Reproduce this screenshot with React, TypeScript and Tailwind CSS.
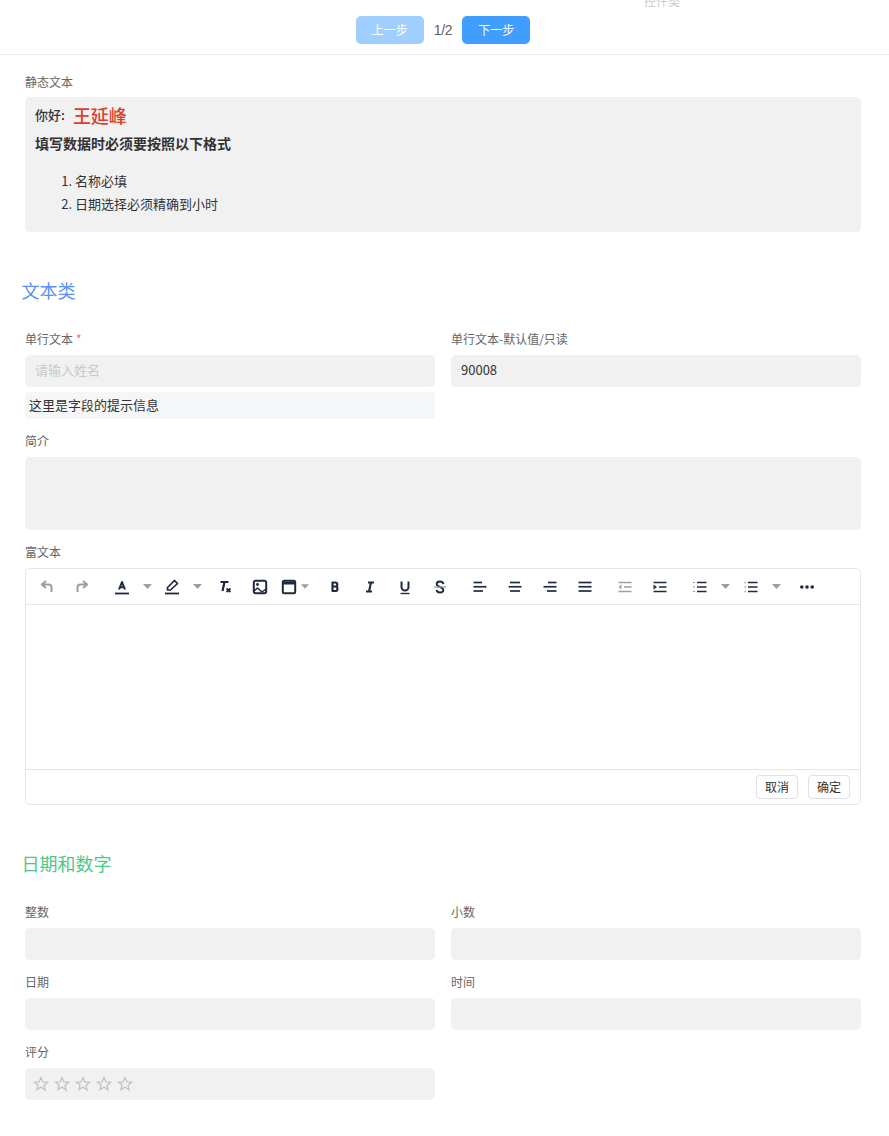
const ink = "#1f2a3f";
const grey = "#9a9ea6";

function Ico({ children, color = ink }: { children: React.ReactNode; color?: string }) {
  return (
    <svg width="16" height="16" viewBox="0 0 16 16" fill="none" stroke={color} strokeWidth="2" strokeLinecap="butt" strokeLinejoin="round">
      {children}
    </svg>
  );
}

function Btn({ className = "w-[35px]", children }: { className?: string; children: React.ReactNode }) {
  return <div className={`flex h-[35px] shrink-0 items-center justify-center ${className}`}>{children}</div>;
}

function Caret({ className = "w-[15px]" }: { className?: string }) {
  return (
    <div className={`flex h-[35px] shrink-0 items-center justify-center ${className}`}>
      <svg width="9" height="5" viewBox="0 0 9 5"><path d="M0 0h9L4.500 5z" fill={grey} /></svg>
    </div>
  );
}

function Lines({ rows }: { rows: [number, number][] }) {
  return (
    <Ico>
      {rows.map(([a, b], i) => (
        <path key={i} d={`M${a} ${3.5 + i * 4.25}H${b}`} strokeWidth="1.700" />
      ))}
    </Ico>
  );
}

function Toolbar() {
  return (
    <div className="flex h-[36px] items-center border-b border-[#e5e5e8] pl-[3.500px]">
      <Btn>
        <Ico color={grey}><path d="M7 2 2.800 5.500 7 9M3 5.500h6.500c2 0 3 1.300 3 3V13" strokeWidth="2" /></Ico>
      </Btn>
      <Btn>
        <Ico color={grey}><path d="m9 2 4.200 3.500L9 9m4-3.500H6.500c-2 0-3 1.300-3 3V13" strokeWidth="2" /></Ico>
      </Btn>
      <Btn className="ml-[5px] w-[35px]">
        <Ico>
          <path d="M5 10.500 8 3l3 7.500M6 8.300h4" strokeWidth="2" />
          <path d="M1 14.500h14" strokeWidth="1.800" />
        </Ico>
      </Btn>
      <Caret />
      <Btn>
        <Ico>
          <path d="M3.500 11V8.500l7-7 3 3-7 6.500z" strokeWidth="1.700" />
          <path d="M1 14.500h14" strokeWidth="1.800" />
        </Ico>
      </Btn>
      <Caret />
      <Btn className="ml-[2.500px] w-[35px]">
        <Ico>
          <path d="M3.500 3h8M7.500 3 5.500 12" strokeWidth="2.200" />
          <path d="m9.500 9.500 4 3.500m0-3.500-4 3.500" strokeWidth="1.800" />
        </Ico>
      </Btn>
      <Btn>
        <Ico>
          <rect x="1.800" y="1.800" width="12.400" height="12.400" rx="2" strokeWidth="2" />
          <circle cx="5.500" cy="5.500" r="1.400" fill={ink} stroke="none" />
          <path d="m2 12 3.500-3 4.500 4 4-3" strokeWidth="1.500" />
        </Ico>
      </Btn>
      <Btn className="w-[24px]">
        <Ico>
          <rect x="1.800" y="1.800" width="12.400" height="12.400" rx="1.500" strokeWidth="2" />
          <path d="M2 4h12" strokeWidth="3" />
        </Ico>
      </Btn>
      <Caret className="w-[8px]" />
      <Btn className="ml-[8.500px] w-[35px]">
        <Ico><path d="M5.500 3.500h2.800a2 2 0 0 1 0 4H5.500zm0 4h3.200a2.300 2.300 0 0 1 0 4.500H5.500z" strokeWidth="2.200" /></Ico>
      </Btn>
      <Btn>
        <Ico><path d="M6 3.500h6M4 12.500h6M9 3.500l-2 9" strokeWidth="2.100" /></Ico>
      </Btn>
      <Btn>
        <Ico>
          <path d="M4.500 2.500V8a3.500 3.500 0 0 0 7 0V2.500" strokeWidth="2" />
          <path d="M3.500 14.500h9" strokeWidth="1.400" />
        </Ico>
      </Btn>
      <Btn>
        <Ico>
          <path d="M11.500 5C11 3.300 9.600 2.500 8 2.500 6 2.500 4.700 3.600 4.700 5c0 1.500 1.300 2.300 3.300 3 2 .7 3.300 1.500 3.300 3 0 1.400-1.300 2.500-3.300 2.500-1.600 0-3-.8-3.500-2.500" strokeWidth="1.900" />
          <path d="M2 8h12" stroke={grey} strokeWidth="1.300" />
        </Ico>
      </Btn>
      <Btn className="ml-[5px] w-[35px]"><Lines rows={[[1.500, 10], [1.500, 14.500], [1.500, 11]]} /></Btn>
      <Btn><Lines rows={[[3, 13], [1.500, 14.500], [3, 13]]} /></Btn>
      <Btn><Lines rows={[[6, 14.500], [1.500, 14.500], [5, 14.500]]} /></Btn>
      <Btn><Lines rows={[[1.500, 14.500], [1.500, 14.500], [1.500, 14.500]]} /></Btn>
      <Btn className="ml-[5px] w-[35px]">
        <Ico color={grey}>
          <path d="M1.500 3.500h13M7 8h7.500M1.500 12.500h13" strokeWidth="1.700" />
          <path d="M4.500 5.500 1.500 8l3 2.500z" fill={grey} stroke="none" />
        </Ico>
      </Btn>
      <Btn>
        <Ico>
          <path d="M1.500 3.500h13M7 8h7.500M1.500 12.500h13" strokeWidth="1.700" />
          <path d="M1.500 5.500 5 8l-3.500 2.500z" fill={ink} stroke="none" />
        </Ico>
      </Btn>
      <Btn className="ml-[5px] w-[35px]">
        <Ico>
          <path d="M5 3.500h9.500M5 8h9.500M5 12.500h9.500" strokeWidth="1.700" />
          <path d="M1.500 3.500h1.500M1.500 8h1.500M1.500 12.500h1.500" strokeWidth="1.200" strokeDasharray="1 .7" />
        </Ico>
      </Btn>
      <Caret />
      <Btn className="ml-px w-[35px]">
        <Ico>
          <path d="M5 3.500h9.500M5 8h9.500M5 12.500h9.500" strokeWidth="1.700" />
          <path d="M1.500 3.500H3M1.500 8H3M1.500 12.500H3" strokeWidth="1.500" stroke={grey} />
        </Ico>
      </Btn>
      <Caret />
      <Btn className="ml-[6px] w-[35px]">
        <svg width="16" height="16" viewBox="0 0 16 16" fill={ink}>
          <circle cx="2.800" cy="8" r="1.800" />
          <circle cx="8" cy="8" r="1.800" />
          <circle cx="13.200" cy="8" r="1.800" />
        </svg>
      </Btn>
    </div>
  );
}

function Field({ label, required, children }: { label: string; required?: boolean; children?: React.ReactNode }) {
  return (
    <div className="mb-[11px]">
      <div className="mb-[5px] h-[22px] text-[12px] leading-[21px] text-[#666666]">
        {label}
        {required && <span className="ml-[3px] text-[#f56c6c]">*</span>}
      </div>
      {children}
    </div>
  );
}

function Input({ value, placeholder }: { value?: string; placeholder?: string }) {
  return (
    <div className={`h-[32px] rounded-[5px] bg-[#f1f1f2] px-[10px] text-[13px] leading-[30px] ${placeholder ? "text-[#c8c9cc]" : "text-[#333333]"}`}>
      {value ?? placeholder}
    </div>
  );
}

function Star() {
  return (
    <svg width="16" height="16" viewBox="0 0 16 16" fill="none" stroke="#c4c4c6" strokeWidth="1.300" strokeLinejoin="miter">
      <path d="m8 1.500 1.900 4.400 4.700.4-3.600 3.100 1.100 4.700L8 11.100l-4.100 2.500L5 8.900 1.400 6.300l4.700-.4z" />
    </svg>
  );
}

export default function App() {
  return (
    <div className="relative min-h-[1136px] w-full overflow-hidden bg-white font-['Noto_Sans_CJK_SC','Noto_Sans',sans-serif] text-[#333333]">
      <span className="absolute left-[644px] top-[-7px] text-[12px] leading-[16px] text-[#c8c9cc]">控件类</span>

      <header className="flex h-[55px] items-center justify-center border-b border-[#ebebeb] pr-[3px] pt-[6px]">
        <button type="button" className="h-[28px] w-[68px] rounded-[5px] bg-[#a0cfff] text-[12px] text-white">上一步</button>
        <span className="mx-[10px] font-['Liberation_Sans',sans-serif] text-[14px] tracking-[-0.3px] text-[#606266]">1/2</span>
        <button type="button" className="h-[28px] w-[68px] rounded-[5px] bg-[#409eff] text-[12px] text-white">下一步</button>
      </header>

      <main className="pl-[25px] pr-[28px] pt-[16px]">
        <div className="mb-[4px] h-[22px] text-[12px] leading-[21px] text-[#666666]">静态文本</div>
        <div className="h-[135px] rounded-[5px] bg-[#f1f1f2] px-[10px] pt-[5px]">
          <p className="flex h-[26px] items-center text-[13px] font-medium">
            你好:<span className="ml-[8px] text-[18px] font-medium text-[#e03e2d]">王延峰</span>
          </p>
          <p className="mt-[3px] text-[14px] font-bold leading-[24px]">填写数据时必须要按照以下格式</p>
          <ol className="mt-[14px] list-decimal pl-[40px] text-[13px] leading-[23px] marker:text-[#333333]">
            <li>名称必填</li>
            <li>日期选择必须精确到小时</li>
          </ol>
        </div>

        <h2 className="-ml-[3.500px] mt-[44px] h-[28px] text-[18px] leading-[28px] text-[#5b8ff9]">文本类</h2>

        <div className="mt-[24px] grid grid-cols-2 gap-x-[16px]">
          <Field label="单行文本" required>
            <Input placeholder="请输入姓名" />
            <div className="mt-[5px] h-[27px] rounded-[4px] bg-[#f5f6f8] px-[4px] text-[13px] leading-[25px]">这里是字段的提示信息</div>
          </Field>
          <Field label="单行文本-默认值/只读">
            <Input value="90008" />
          </Field>
        </div>

        <Field label="简介">
          <div className="h-[73px] rounded-[5px] bg-[#f1f1f2]" />
        </Field>

        <Field label="富文本">
          <div className="h-[237px] rounded-[5px] border border-[#e5e5e8]">
            <Toolbar />
            <div className="h-[164px]" />
            <div className="flex h-[35px] items-center justify-end gap-[10px] border-t border-[#e5e5e8] pr-[10px]">
              <button type="button" className="h-[24px] w-[42px] rounded-[4px] border border-[#e0e0e6] text-[12px] text-[#333333]">取消</button>
              <button type="button" className="h-[24px] w-[42px] rounded-[4px] border border-[#e0e0e6] text-[12px] text-[#333333]">确定</button>
            </div>
          </div>
        </Field>

        <h2 className="-ml-[3.500px] mt-[44px] h-[28px] text-[18px] leading-[28px] text-[#4cc98a]">日期和数字</h2>

        <div className="mt-[24px] grid grid-cols-2 gap-x-[16px]">
          <Field label="整数"><Input value="" /></Field>
          <Field label="小数"><Input value="" /></Field>
          <Field label="日期"><Input value="" /></Field>
          <Field label="时间"><Input value="" /></Field>
          <Field label="评分">
            <div className="flex h-[32px] items-center gap-[5px] rounded-[5px] bg-[#f1f1f2] pl-[7.500px]">
              <Star /><Star /><Star /><Star /><Star />
            </div>
          </Field>
        </div>
      </main>
    </div>
  );
}
